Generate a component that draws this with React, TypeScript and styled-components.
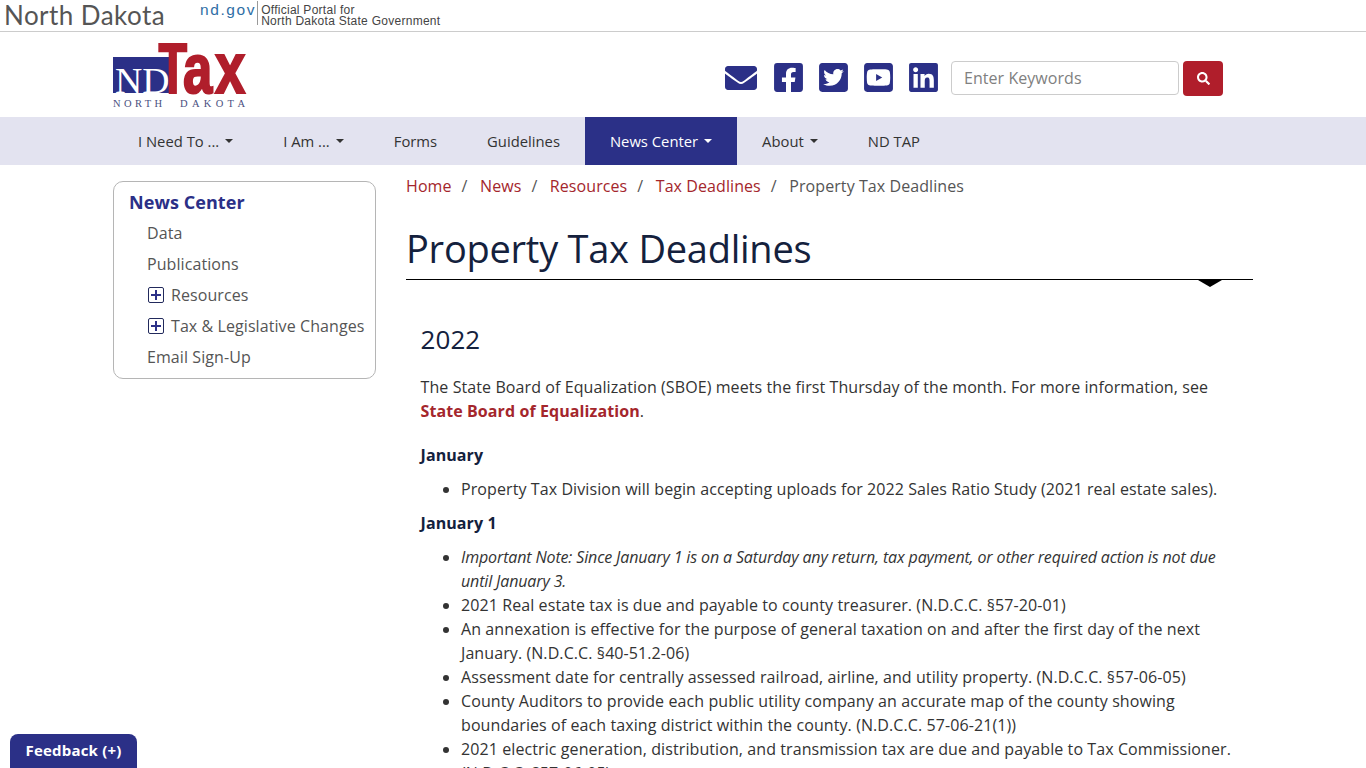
import * as React from 'react';
import styled, { createGlobalStyle } from 'styled-components';
import { FaEnvelope, FaFacebookSquare, FaLinkedin, FaSearch, FaTwitterSquare, FaYoutubeSquare } from 'react-icons/fa';

const GlobalStyle = createGlobalStyle`
  html, body {
    margin: 0;
    height: 100%;
    overflow: hidden;
    background: #fff;
  }
  body {
    font-family: "Open Sans", sans-serif;
    font-size: 16px;
    line-height: 24px;
    color: #333;
  }
  * {
    box-sizing: border-box;
  }
`;

const TopBar = styled.div`
  display: flex;
  align-items: flex-start;
  height: 32px;
  padding-left: 4px;
  border-bottom: 1px solid #ccc;
`;

const StateName = styled.div`
  font-family: Lato, sans-serif;
  font-size: 26px;
  line-height: 30px;
  color: #555;
  width: 196px;
  letter-spacing: 0.45px;
`;

const PortalMark = styled.div`
  font-family: "Liberation Sans", sans-serif;
  font-size: 15.5px;
  line-height: 18px;
  letter-spacing: 1.6px;
  color: #2f6ea5;
  margin-top: 1px;
  padding-right: 1px;
  border-right: 1px solid #999;
  height: 24px;
`;

const PortalText = styled.div`
  font-family: "Liberation Sans", sans-serif;
  font-size: 12px;
  line-height: 11px;
  letter-spacing: 0.27px;
  color: #444;
  padding: 5px 0 0 3px;
`;

const Container = styled.div`
  width: 1140px;
  margin: 0 auto;
`;

const Masthead = styled(Container)`
  display: flex;
  align-items: flex-start;
  justify-content: space-between;
  height: 85px;
  padding: 11px 30px 0 0;
`;

const LogoSvg = styled.svg`
  display: block;
  width: 134px;
  height: 66px;
`;

const SocialRow = styled.div`
  display: flex;
  align-items: center;
  margin-top: 18px;
`;

const SocialLink = styled.a<{ $gap: number; $size: number }>`
  display: flex;
  color: #2b3087;
  font-size: ${({ $size }) => $size}px;
  margin: 0 ${({ $gap }) => $gap}px 2px 0;
`;

const SearchInput = styled.input`
  align-self: flex-start;
  width: 228px;
  height: 34px;
  padding: 0 12px;
  font: 16px "Open Sans", sans-serif;
  letter-spacing: 0.05px;
  border: 1px solid #ccc;
  border-radius: 4px;
  outline: none;
  &::placeholder {
    color: #808080;
    opacity: 1;
  }
`;

const SearchButton = styled.button`
  display: flex;
  align-items: center;
  justify-content: center;
  width: 40px;
  height: 35px;
  margin-left: 4px;
  border: 0;
  border-radius: 4px;
  color: #fff;
  font-size: 13px;
  background: #b01e2b;
`;

const NavBar = styled.div`
  height: 48px;
  background: #e3e3f0;
`;

const NavList = styled(Container)`
  display: flex;
`;

const NavItem = styled.a<{ $active?: boolean }>`
  display: flex;
  align-items: center;
  height: 48px;
  padding: 0 25px;
  font-size: 14.8px;
  color: ${({ $active }) => ($active ? '#fff' : '#333')};
  background: ${({ $active }) => ($active ? '#2b3087' : 'transparent')};
`;

const Caret = styled.span`
  display: inline-block;
  width: 0;
  height: 0;
  margin-left: 6px;
  border-top: 4px solid currentColor;
  border-left: 4px solid transparent;
  border-right: 4px solid transparent;
`;

const Columns = styled(Container)`
  display: flex;
  align-items: flex-start;
`;

const SideMenu = styled.div`
  flex: none;
  width: 263px;
  height: 198px;
  margin: 16px 30px 0 0;
  padding: 8px 0 0 15px;
  border: 1px solid #b5b5b5;
  border-radius: 10px;
  letter-spacing: 0.08px;
`;

const SideTitle = styled.div`
  font-size: 18px;
  font-weight: 700;
  line-height: 24px;
  margin-bottom: 3px;
  color: #2b3087;
`;

const SideItem = styled.div`
  display: flex;
  align-items: center;
  height: 31px;
  padding-left: 18px;
  color: #555;
  white-space: nowrap;
`;

const PlusBox = styled.span`
  display: flex;
  align-items: center;
  justify-content: center;
  width: 16px;
  height: 16px;
  margin: 0 7px 0 1px;
  border: 1px solid #222a5c;
  border-radius: 2px;
  color: #2b3087;
`;

const Main = styled.div`
  flex: 1;
  min-width: 0;
`;

const Breadcrumbs = styled.div`
  display: flex;
  height: 24px;
  margin-top: 9px;
  color: #555;
  letter-spacing: 0.08px;
`;

const Crumb = styled.a`
  color: #a4262c;
`;

const CrumbSep = styled.span`
  padding: 0 12.5px 0 10px;
`;

const PageTitle = styled.h1`
  position: relative;
  height: 55px;
  margin: 27px 0 0;
  font-size: 38px;
  font-weight: 400;
  line-height: 46px;
  letter-spacing: -0.25px;
  color: #14213d;
  border-bottom: 1px solid #000;
  &::after {
    content: '';
    position: absolute;
    right: 31px;
    bottom: -8px;
    border-top: 7px solid #000;
    border-left: 12px solid transparent;
    border-right: 12px solid transparent;
  }
`;

const Article = styled.div`
  padding: 0 20px 0 14.5px;
  letter-spacing: 0.09px;
`;

const YearHeading = styled.h2`
  margin: 41px 0 0;
  font-size: 26px;
  font-weight: 400;
  line-height: 36px;
  color: #14213d;
`;

const Paragraph = styled.p`
  margin: 18px 0 0;
`;

const RedLink = styled.a`
  font-weight: 700;
  color: #a4262c;
`;

const MonthHeading = styled.p<{ $tight?: boolean }>`
  margin: ${({ $tight }) => ($tight ? '10px' : '20px')} 0 0;
  font-weight: 700;
  color: #14213d;
`;

const DeadlineList = styled.ul`
  margin: 10px 0 0;
  padding-left: 40.5px;
`;

const Note = styled.em`
  letter-spacing: -0.14px;
`;

const FeedbackTab = styled.a`
  position: fixed;
  left: 10px;
  bottom: 0;
  width: 127px;
  height: 34px;
  padding-top: 4px;
  text-align: center;
  font-size: 15px;
  font-weight: 700;
  letter-spacing: 0.2px;
  color: #fff;
  background: #2b3087;
  border-radius: 8px 8px 0 0;
`;

function TaxLogo() {
  return (
    <LogoSvg viewBox="0 0 134 66">
      <path d="M0 14H58L60 19L62 21L63 50H0Z" fill="#2b3087" />
      <path d="M0 29L8 26H52L58 32L60 50H0Z" fill="#2b3087" />
      <text transform="translate(2 50) scale(1.08 1)" fontFamily="Liberation Serif" fontSize="35" fill="#fff">ND</text>
      <g fill="#b01e2b" stroke="#b01e2b" strokeWidth="1.2" fontFamily="Liberation Sans" fontWeight="700">
        <text transform="translate(45.5 50) scale(1.17 1.8)" fontSize="40">T</text>
        <text transform="translate(70 50) scale(1.32 1.75)" fontSize="40">a</text>
        <text transform="translate(102 50) scale(1.36 1.83)" fontSize="40">x</text>
      </g>
      <g fontFamily="Liberation Serif" fontSize="10.5" fill="#4a4f80">
        <text x="0" y="64" textLength="49" lengthAdjust="spacing">NORTH</text>
        <text x="67" y="64" textLength="65" lengthAdjust="spacing">DAKOTA</text>
      </g>
    </LogoSvg>
  );
}

function PlusIcon() {
  return (
    <PlusBox>
      <svg width="10" height="10" viewBox="0 0 10 10">
        <path d="M4 0H6V4H10V6H6V10H4V6H0V4H4Z" fill="currentColor" />
      </svg>
    </PlusBox>
  );
}

export default function App() {
  return (
    <>
      <GlobalStyle />
      <TopBar>
        <StateName>North Dakota</StateName>
        <PortalMark>nd.gov</PortalMark>
        <PortalText>
          Official Portal for
          <br />
          North Dakota State Government
        </PortalText>
      </TopBar>
      <Masthead>
        <TaxLogo />
        <SocialRow>
          <SocialLink $size={32} $gap={15}><FaEnvelope /></SocialLink>
          <SocialLink $size={33} $gap={12}><FaFacebookSquare /></SocialLink>
          <SocialLink $size={33} $gap={12}><FaTwitterSquare /></SocialLink>
          <SocialLink $size={33} $gap={12}><FaYoutubeSquare /></SocialLink>
          <SocialLink $size={33} $gap={11}><FaLinkedin /></SocialLink>
          <SearchInput placeholder="Enter Keywords" />
          <SearchButton><FaSearch /></SearchButton>
        </SocialRow>
      </Masthead>
      <NavBar>
        <NavList>
          <NavItem>I Need To ...<Caret /></NavItem>
          <NavItem>I Am ...<Caret /></NavItem>
          <NavItem>Forms</NavItem>
          <NavItem>Guidelines</NavItem>
          <NavItem $active>News Center<Caret /></NavItem>
          <NavItem>About<Caret /></NavItem>
          <NavItem>ND TAP</NavItem>
        </NavList>
      </NavBar>
      <Columns>
        <SideMenu>
          <SideTitle>News Center</SideTitle>
          <SideItem>Data</SideItem>
          <SideItem>Publications</SideItem>
          <SideItem><PlusIcon />Resources</SideItem>
          <SideItem><PlusIcon />Tax &amp; Legislative Changes</SideItem>
          <SideItem>Email Sign-Up</SideItem>
        </SideMenu>
        <Main>
          <Breadcrumbs>
            <Crumb>Home</Crumb><CrumbSep>/</CrumbSep>
            <Crumb>News</Crumb><CrumbSep>/</CrumbSep>
            <Crumb>Resources</Crumb><CrumbSep>/</CrumbSep>
            <Crumb>Tax Deadlines</Crumb><CrumbSep>/</CrumbSep>
            <span>Property Tax Deadlines</span>
          </Breadcrumbs>
          <PageTitle>Property Tax Deadlines</PageTitle>
          <Article>
            <YearHeading>2022</YearHeading>
            <Paragraph>
              The State Board of Equalization (SBOE) meets the first Thursday of the month. For more information, see{' '}
              <RedLink>State Board of Equalization</RedLink>.
            </Paragraph>
            <MonthHeading>January</MonthHeading>
            <DeadlineList>
              <li>Property Tax Division will begin accepting uploads for 2022 Sales Ratio Study (2021 real estate sales).</li>
            </DeadlineList>
            <MonthHeading $tight>January 1</MonthHeading>
            <DeadlineList>
              <li><Note>Important Note: Since January 1 is on a Saturday any return, tax payment, or other required action is not due until January 3.</Note></li>
              <li>2021 Real estate tax is due and payable to county treasurer. (N.D.C.C. §57-20-01)</li>
              <li>An annexation is effective for the purpose of general taxation on and after the first day of the next January. (N.D.C.C. §40-51.2-06)</li>
              <li>Assessment date for centrally assessed railroad, airline, and utility property. (N.D.C.C. §57-06-05)</li>
              <li>County Auditors to provide each public utility company an accurate map of the county showing boundaries of each taxing district within the county. (N.D.C.C. 57-06-21(1))</li>
              <li>2021 electric generation, distribution, and transmission tax are due and payable to Tax Commissioner. (N.D.C.C. §57-06-05)</li>
            </DeadlineList>
          </Article>
        </Main>
      </Columns>
      <FeedbackTab>Feedback (+)</FeedbackTab>
    </>
  );
}
